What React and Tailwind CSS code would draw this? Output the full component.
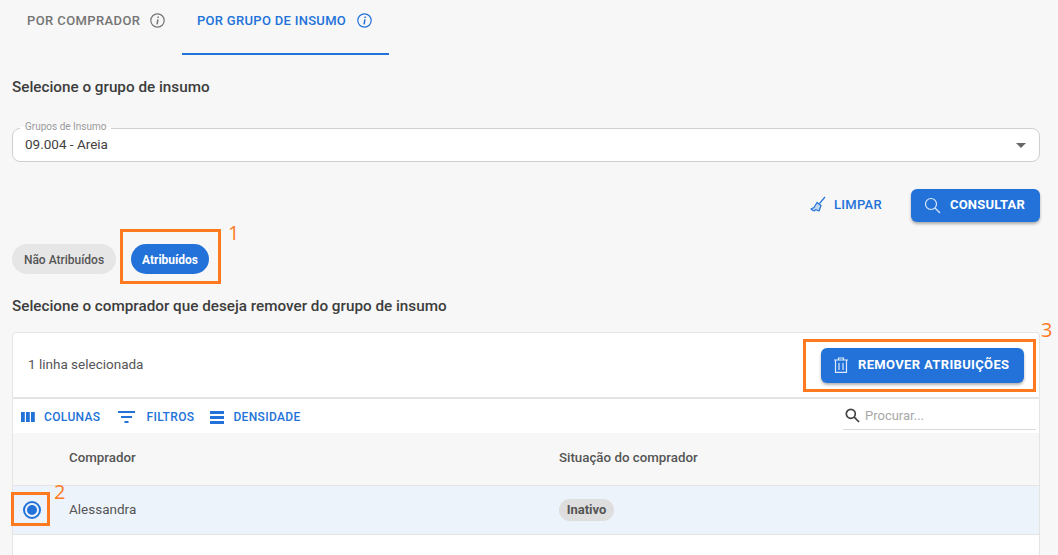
import React from "react";

const Info = () => (
  <svg width="15" height="15" viewBox="0 0 15 15" fill="none">
    <circle cx="7.5" cy="7.5" r="6.7" stroke="currentColor" strokeWidth="1.2" />
    <path d="M8.200 3.400v1.500M7.900 6.300 7.100 11.400" stroke="currentColor" strokeWidth="1.500" />
  </svg>
);

const Mark = ({ n, box, num }) => (
  <>
    <div className={"absolute border-[3px] border-[#ff7a1f] " + box} />
    <span className={"absolute text-[20px] font-medium leading-none text-[#ff7a1f] font-['Open_Sans',sans-serif] " + num}>{n}</span>
  </>
);

export default function App() {
  return (
    <div className="relative h-[555px] w-[1058px] overflow-hidden bg-[#f7f7f7] font-['Roboto',sans-serif] text-[#424242]">
      <div className="flex h-[55px] pl-3">
        <div className="flex w-[170px] items-start gap-[10px] pl-[15px] pt-[13px] text-[#757575]">
          <span className="text-[13px] font-medium leading-[15px] tracking-[0.4px]">POR COMPRADOR</span>
          <Info />
        </div>
        <div className="flex w-[207px] items-start gap-[11px] border-b-2 border-[#2272d9] pl-[15px] pt-[13px] text-[#2272d9]">
          <span className="text-[13px] font-medium leading-[15px] tracking-[0.3px]">POR GRUPO DE INSUMO</span>
          <Info />
        </div>
      </div>

      <div className="px-3">
        <h2 className="mt-[23px] text-[15.25px] font-medium leading-[18px] text-[#3d3d3d]">Selecione o grupo de insumo</h2>

        <div className="relative mt-[32px] flex h-[34px] w-[1028px] items-center justify-between rounded-lg border border-[#cfcfcf] bg-white pb-[2px] pl-3 pr-[13px]">
          <span className="absolute -top-[8px] left-[7px] bg-[linear-gradient(#f7f7f7_50%,#ffffff_50%)] px-[5px] text-[10px] leading-[12px] text-[#9a9a9a]">Grupos de Insumo</span>
          <span className="text-[13.5px] leading-4 text-[#424242]">09.004 - Areia</span>
          <span className="mt-[2px] h-0 w-0 border-x-[5px] border-t-[5px] border-x-transparent border-t-[#666666]" />
        </div>

        <div className="mt-[27px] flex h-[33px] w-[1028px] items-center justify-end">
          <button className="flex items-center gap-2 pb-[2px] text-[#2272d9]">
            <svg width="16" height="17" viewBox="0 0 16 17" fill="none">
              <path d="M15 1 9.5 7.5" stroke="#2272d9" strokeWidth="1.2" />
              <path d="M7 6.5 11 9.5 9 15 5.500 13.500 4.500 15 3 14.500 1 13 4 11.500Z" stroke="#2272d9" strokeWidth="1.2" fill="#2272d9" fillOpacity="0.25" strokeLinejoin="round" />
            </svg>
            <span className="text-[13px] font-medium leading-[15px] tracking-[0.3px]">LIMPAR</span>
          </button>
          <button className="ml-[29px] flex h-[33px] w-[129px] items-center gap-[9px] rounded-md bg-[#2272d9] pl-[13px] text-white shadow-[0_2px_3px_rgba(0,0,0,0.3)]">
            <svg width="17" height="17" viewBox="0 0 17 17" fill="none" stroke="#dce9fa" strokeWidth="1.2">
              <circle cx="7" cy="7" r="5.500" />
              <path d="M11 11l5 5" />
            </svg>
            <span className="pb-[2px] text-[13px] font-bold leading-[15px] tracking-[0.2px]">CONSULTAR</span>
          </button>
        </div>

        <div className="mt-[22px] flex h-[30px] gap-[15px]">
          <span className="flex w-[104px] items-center justify-center rounded-full bg-[#e6e6e6] pt-[1px] text-[12px] font-medium text-[#555555]">Não Atribuídos</span>
          <span className="flex w-[78px] items-center justify-center rounded-full bg-[#2272d9] pt-[1px] text-[12px] font-bold text-white">Atribuídos</span>
        </div>

        <h2 className="mt-[23px] text-[15.25px] font-medium leading-[18px] text-[#3d3d3d]">Selecione o comprador que deseja remover do grupo de insumo</h2>

        <div className="mt-[17px] flex h-[66px] w-[1028px] items-center justify-between rounded-t border border-[#e4e4e4] bg-white pl-[15px] pr-[15px]">
          <span className="pb-[2px] text-[13.5px] text-[#555555]">1 linha selecionada</span>
          <button className="flex h-[35px] w-[203px] items-center gap-[10px] rounded-md bg-[#2272d9] pl-[13px] text-white shadow-[0_2px_3px_rgba(0,0,0,0.3)]">
            <svg width="14" height="16" viewBox="0 0 14 16" fill="none" stroke="#dce9fa" strokeWidth="1.2">
              <path d="M0 3h14M4.500 3V1h5v2M1.500 3v12.300h11V3M5 6v7M9 6v7" />
            </svg>
            <span className="pb-[2px] text-[13px] font-bold leading-[15px] tracking-[0.35px]">REMOVER ATRIBUIÇÕES</span>
          </button>
        </div>

        <div className="flex h-[160px] w-[1028px] flex-col border-x border-[#e4e4e4] bg-white">
          <div className="flex h-[35px] items-center justify-between border-t border-[#e4e4e4] pl-2 pr-[3px]">
            <div className="flex items-center pt-[2px] text-[#2272d9]">
              <svg width="14" height="10" viewBox="0 0 14 10" fill="#2272d9"><path d="M0 0h3.800v10H0zM5 0h3.800v10H5zM10 0h3.800v10H10z" /></svg>
              <span className="ml-[9px] text-[12px] font-medium tracking-[0.35px]">COLUNAS</span>
              <svg className="ml-[18px]" width="18" height="12" viewBox="0 0 18 12" fill="#2272d9"><path d="M0 0h17v2H0zM3 5h11v2H3zM6.500 10h4v2h-4z" /></svg>
              <span className="ml-[10px] text-[12px] font-medium tracking-[0.35px]">FILTROS</span>
              <svg className="ml-[16px]" width="14" height="13" viewBox="0 0 14 13" fill="#2272d9"><path d="M0 0h14v3H0zM0 5h14v3H0zM0 10h14v3H0z" /></svg>
              <span className="ml-[9px] text-[12px] font-medium tracking-[0.35px]">DENSIDADE</span>
            </div>
            <div className="flex h-[31px] w-[193px] items-center gap-[5px] self-start border-b border-[#d9d9d9] pl-[2px] pt-[3px]">
              <svg width="15" height="15" viewBox="0 0 15 15" fill="none" stroke="#424242" strokeWidth="1.7">
                <circle cx="5.800" cy="5.800" r="4.500" />
                <path d="M9.200 9.200 14 14" />
              </svg>
              <span className="text-[13px] text-[#a8a8a8]">Procurar...</span>
            </div>
          </div>
          <div className="flex h-[53px] items-center border-b border-[#e4e4e4] bg-[#f7f7f7] pb-[2px] text-[13.3px] font-medium text-[#555555]">
            <span className="ml-[56px] w-[490px]">Comprador</span>
            <span>Situação do comprador</span>
          </div>
          <div className="flex h-[49px] items-center border-b border-[#e4e4e4] bg-[#edf3fb] text-[13.5px] text-[#555555]">
            <span className="ml-[10px] flex h-[18px] w-[18px] items-center justify-center rounded-full border-2 border-[#2272d9]">
              <span className="h-[10px] w-[10px] rounded-full bg-[#2272d9]" />
            </span>
            <span className="ml-[28px] mb-[2px] w-[490px]">Alessandra</span>
            <span className="mb-[1px] flex h-[22px] w-[55px] items-center justify-center rounded-full bg-[#dedede] text-[13px] font-bold text-[#555555]">Inativo</span>
          </div>
        </div>
      </div>

      <Mark n="1" box="left-[120px] top-[229px] h-[55px] w-[101px]" num="left-[228px] top-[223px]" />
      <Mark n="3" box="left-[803px] top-[339px] h-[53px] w-[233px]" num="left-[1041px] top-[320px]" />
      <Mark n="2" box="left-[11px] top-[492px] h-[34px] w-[39px]" num="left-[54px] top-[482px]" />
    </div>
  );
}
